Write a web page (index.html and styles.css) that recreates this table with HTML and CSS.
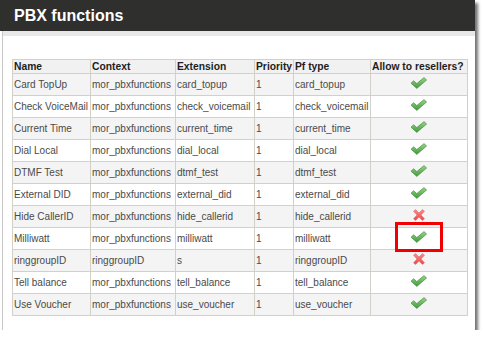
FILE: index.html
```html
<!DOCTYPE html>
<html>
<head>
<meta charset="utf-8">
<link rel="stylesheet" href="styles.css">
</head>
<body>
<svg width="0" height="0" class="defs">
  <defs>
    <linearGradient id="gchk" x1="0" y1="0" x2="0" y2="1">
      <stop offset="0" stop-color="#9ad68a"/>
      <stop offset="1" stop-color="#3f9a3c"/>
    </linearGradient>
    <linearGradient id="gx" x1="0" y1="0" x2="0" y2="1">
      <stop offset="0" stop-color="#ff8a8a"/>
      <stop offset="1" stop-color="#e84848"/>
    </linearGradient>
    <symbol id="chk" viewBox="0 0 18 12">
      <path d="M1 6.2 L3.6 3.8 L6.8 6.6 L14 0.6 L16.6 3 L6.8 11.4 Z" fill="url(#gchk)" stroke="#4d8f41" stroke-width="0.7" stroke-linejoin="round"/>
    </symbol>
    <symbol id="xx" viewBox="0 0 14 12">
      <path d="M1.5 2.2 L3.6 0.6 L7 4 L10.4 0.6 L12.5 2.2 L9 6 L12.5 9.8 L10.4 11.4 L7 8 L3.6 11.4 L1.5 9.8 L5 6 Z" fill="url(#gx)" stroke="#e06060" stroke-width="0.5" stroke-linejoin="round"/>
    </symbol>
  </defs>
</svg>
<div class="window">
  <div class="titlebar">PBX functions</div>
  <div class="content">
    <table class="grid">
      <colgroup>
        <col class="c1"><col class="c2"><col class="c3"><col class="c4"><col class="c5"><col class="c6">
      </colgroup>
      <thead>
        <tr><th>Name</th><th>Context</th><th>Extension</th><th>Priority</th><th>Pf type</th><th>Allow to resellers?</th></tr>
      </thead>
      <tbody>
        <tr class="odd"><td>Card TopUp</td><td>mor_pbxfunctions</td><td>card_topup</td><td>1</td><td>card_topup</td><td class="ic"><svg class="i-chk"><use href="#chk"/></svg></td></tr>
        <tr><td>Check VoiceMail</td><td>mor_pbxfunctions</td><td>check_voicemail</td><td>1</td><td>check_voicemail</td><td class="ic"><svg class="i-chk"><use href="#chk"/></svg></td></tr>
        <tr class="odd"><td>Current Time</td><td>mor_pbxfunctions</td><td>current_time</td><td>1</td><td>current_time</td><td class="ic"><svg class="i-chk"><use href="#chk"/></svg></td></tr>
        <tr><td>Dial Local</td><td>mor_pbxfunctions</td><td>dial_local</td><td>1</td><td>dial_local</td><td class="ic"><svg class="i-chk"><use href="#chk"/></svg></td></tr>
        <tr class="odd"><td>DTMF Test</td><td>mor_pbxfunctions</td><td>dtmf_test</td><td>1</td><td>dtmf_test</td><td class="ic"><svg class="i-chk"><use href="#chk"/></svg></td></tr>
        <tr><td>External DID</td><td>mor_pbxfunctions</td><td>external_did</td><td>1</td><td>external_did</td><td class="ic"><svg class="i-chk"><use href="#chk"/></svg></td></tr>
        <tr class="odd"><td>Hide CallerID</td><td>mor_pbxfunctions</td><td>hide_callerid</td><td>1</td><td>hide_callerid</td><td class="ic"><svg class="i-x"><use href="#xx"/></svg></td></tr>
        <tr><td>Milliwatt</td><td>mor_pbxfunctions</td><td>milliwatt</td><td>1</td><td>milliwatt</td><td class="ic hl"><svg class="i-chk"><use href="#chk"/></svg><span class="mark"></span></td></tr>
        <tr class="odd"><td>ringgroupID</td><td>ringgroupID</td><td>s</td><td>1</td><td>ringgroupID</td><td class="ic"><svg class="i-x"><use href="#xx"/></svg></td></tr>
        <tr><td>Tell balance</td><td>mor_pbxfunctions</td><td>tell_balance</td><td>1</td><td>tell_balance</td><td class="ic"><svg class="i-chk"><use href="#chk"/></svg></td></tr>
        <tr class="odd"><td>Use Voucher</td><td>mor_pbxfunctions</td><td>use_voucher</td><td>1</td><td>use_voucher</td><td class="ic"><svg class="i-chk"><use href="#chk"/></svg></td></tr>
      </tbody>
    </table>
  </div>
</div>
</body>
</html>
```

FILE: styles.css
```css
html, body {
  margin: 0;
  padding: 0;
  background: #ffffff;
}
.defs {
  position: absolute;
  width: 0;
  height: 0;
}
.window {
  width: 473px;
  margin-left: 2px;
  background: #fff;
  border-left: 1px solid #c8c8c8;
  box-shadow: 3px 3px 3px rgba(0, 0, 0, 0.55);
  height: 330px;
  box-sizing: border-box;
}
.titlebar {
  height: 31px;
  margin-left: -3px;
  background: #2f2f2d;
  color: #ffffff;
  font-family: "Liberation Sans", Arial, sans-serif;
  font-weight: bold;
  font-size: 16px;
  line-height: 31px;
  padding-left: 14px;
}
.content {
  border-top: 5px solid #e8e8e8;
  padding: 23px 0 0 9px;
}
.grid {
  border-collapse: collapse;
  table-layout: fixed;
  width: 455px;
  font-family: "Liberation Sans", Arial, sans-serif;
  font-size: 10px;
  color: #4a4a4a;
}
.c1 { width: 78px; }
.c2 { width: 85px; }
.c3 { width: 79px; }
.c4 { width: 39px; }
.c5 { width: 77px; }
.c6 { width: 97px; }
.grid th, .grid td {
  border: 1px solid #d3d0ca;
  padding: 0 0 0 1px;
  text-align: left;
  white-space: nowrap;
  overflow: hidden;
}
.grid th {
  height: 13px;
  line-height: 13px;
  font-weight: bold;
  font-size: 10.3px;
  color: #1e1e1e;
  background: #f1f1f1;
}
.grid td {
  height: 21px;
  line-height: 21px;
}
.grid tr.odd td {
  background: #f4f4f4;
}
.grid td.ic {
  text-align: center;
  padding: 0;
}
.i-chk {
  width: 18px;
  height: 12px;
  vertical-align: -1px;
}
.i-x {
  width: 14px;
  height: 12px;
  vertical-align: -1px;
}
.grid td.hl {
  position: relative;
  overflow: visible;
}
.mark {
  position: absolute;
  left: 24px;
  top: -6px;
  width: 42px;
  height: 24px;
  border: 3px solid #f00000;
}
```
